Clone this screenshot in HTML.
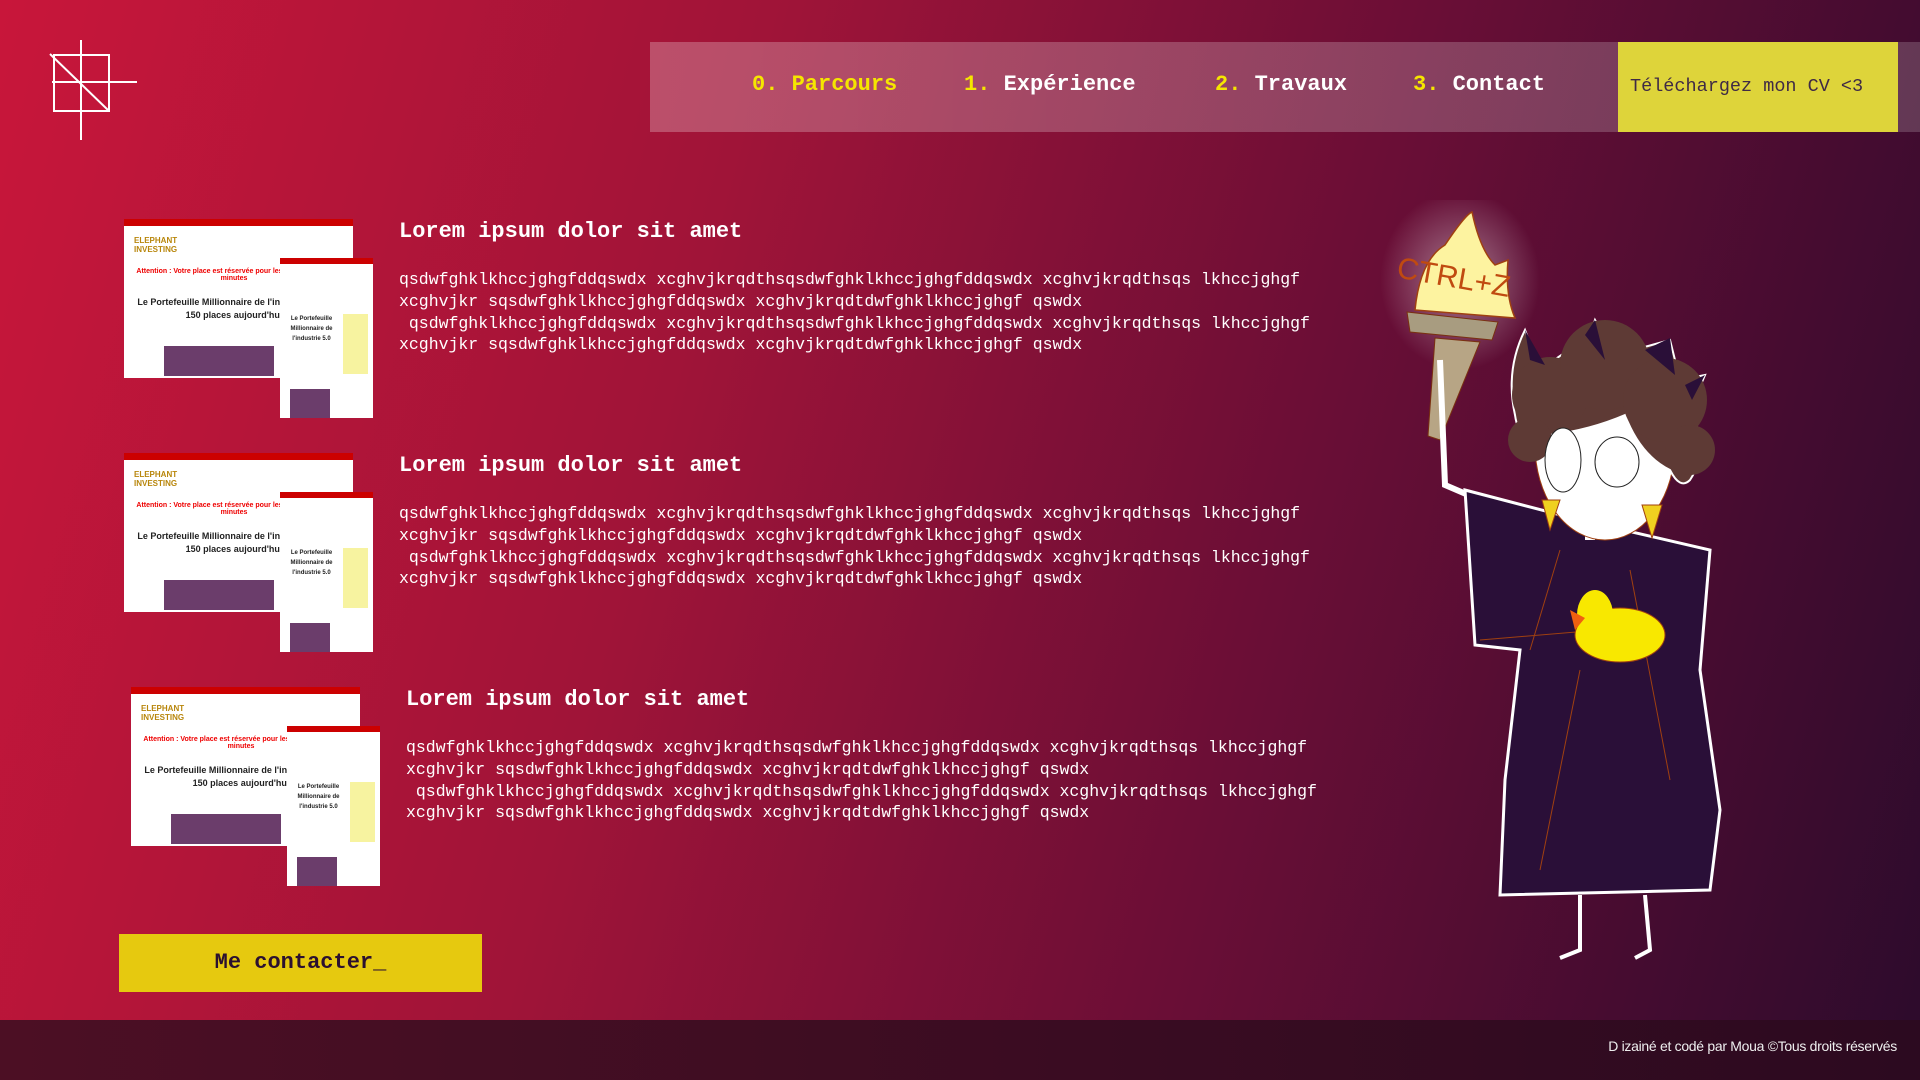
<!DOCTYPE html>
<html><head><meta charset="utf-8">
<style>
*{margin:0;padding:0;box-sizing:border-box}
html,body{width:1920px;height:1080px;overflow:hidden}
body{position:relative;background:linear-gradient(105deg,#c8163a 0%,#a01438 35%,#6a0e36 65%,#2c0b2c 100%);font-family:"Liberation Mono",monospace;color:#fff}
.nav{position:absolute;left:650px;top:42px;width:1270px;height:90px;background:linear-gradient(90deg,rgba(255,255,255,.25),rgba(255,255,255,.18))}
.nav span{position:absolute;top:30px;font-size:22px;font-weight:bold;white-space:nowrap}
.nav b{color:#f5e600}
.cv{position:absolute;left:1618px;top:42px;width:280px;height:90px;background:#ded43a;color:#3f2a45;font-size:18.5px;line-height:90px;padding-left:12px;white-space:nowrap}
.item{position:absolute;left:0;width:1400px;height:200px}
.h{position:absolute;left:399px;top:0;font-size:22px;font-weight:bold;white-space:nowrap}
.p{position:absolute;left:399px;top:50px;font-size:16.5px;line-height:21.8px;white-space:pre}
.img1{position:absolute;left:124px;top:0;width:229px;height:159px;background:#fff;border-top:7px solid #c00;overflow:hidden}
.img2{position:absolute;left:280px;top:39px;width:93px;height:160px;background:#fff;border-top:6px solid #c00;overflow:hidden}
.t{position:absolute;color:#222;font-family:"Liberation Sans",sans-serif;font-weight:bold;text-align:center}
.btn{position:absolute;left:119px;top:934px;width:363px;height:58px;background:#e6c90f;color:#2b1030;font-size:22px;font-weight:bold;text-align:center;line-height:58px}
.foot{position:absolute;left:0;top:1020px;width:1920px;height:60px;background:linear-gradient(90deg,#4c0f24,#2c0a20);}
.foot span{position:absolute;right:23px;top:18px;font-family:"Liberation Sans",sans-serif;font-size:14px;color:#eee;letter-spacing:-0.3px}
</style></head><body>
<svg style="position:absolute;left:0;top:0" width="200" height="200"><g stroke="#fff" stroke-width="2" fill="none"><rect x="54" y="55" width="55" height="56"/><line x1="81" y1="40" x2="81" y2="140"/><line x1="52" y1="82" x2="137" y2="82"/><line x1="50" y1="54" x2="109" y2="111"/></g></svg>
<div class="nav">
<span style="left:102px"><b>0. Parcours</b></span>
<span style="left:314px"><b>1.</b> Expérience</span>
<span style="left:565px"><b>2.</b> Travaux</span>
<span style="left:763px"><b>3.</b> Contact</span>
</div>
<div class="cv">Téléchargez mon CV &lt;3</div>

<div class="item" style="top:219px">
<div class="img1"><div class="t" style="left:10px;top:10px;color:#b8860b;font-size:8px">ELEPHANT<br>INVESTING</div><div class="t" style="left:10px;top:42px;width:200px;color:#e00;font-size:7px">Attention : Votre place est réservée pour les 15 prochaines minutes</div><div class="t" style="left:10px;top:70px;width:200px;font-size:9px;line-height:13px">Le Portefeuille Millionnaire de l'industrie 5.0 :<br>150 places aujourd'hui</div><div style="position:absolute;left:40px;top:120px;width:110px;height:30px;background:#6b3d6b"></div></div>
<div class="img2"><div class="t" style="left:4px;top:50px;width:55px;font-size:6px;line-height:10px">Le Portefeuille Millionnaire de l'industrie 5.0</div><div style="position:absolute;left:63px;top:50px;width:25px;height:60px;background:#f7f3a0"></div><div style="position:absolute;left:10px;top:125px;width:40px;height:30px;background:#6b3d6b"></div></div>
<div class="h">Lorem ipsum dolor sit amet</div>
<div class="p">qsdwfghklkhccjghgfddqswdx xcghvjkrqdthsqsdwfghklkhccjghgfddqswdx xcghvjkrqdthsqs lkhccjghgf
xcghvjkr sqsdwfghklkhccjghgfddqswdx xcghvjkrqdtdwfghklkhccjghgf qswdx
 qsdwfghklkhccjghgfddqswdx xcghvjkrqdthsqsdwfghklkhccjghgfddqswdx xcghvjkrqdthsqs lkhccjghgf
xcghvjkr sqsdwfghklkhccjghgfddqswdx xcghvjkrqdtdwfghklkhccjghgf qswdx</div>
</div>

<div class="item" style="top:453px">
<div class="img1"><div class="t" style="left:10px;top:10px;color:#b8860b;font-size:8px">ELEPHANT<br>INVESTING</div><div class="t" style="left:10px;top:42px;width:200px;color:#e00;font-size:7px">Attention : Votre place est réservée pour les 15 prochaines minutes</div><div class="t" style="left:10px;top:70px;width:200px;font-size:9px;line-height:13px">Le Portefeuille Millionnaire de l'industrie 5.0 :<br>150 places aujourd'hui</div><div style="position:absolute;left:40px;top:120px;width:110px;height:30px;background:#6b3d6b"></div></div>
<div class="img2"><div class="t" style="left:4px;top:50px;width:55px;font-size:6px;line-height:10px">Le Portefeuille Millionnaire de l'industrie 5.0</div><div style="position:absolute;left:63px;top:50px;width:25px;height:60px;background:#f7f3a0"></div><div style="position:absolute;left:10px;top:125px;width:40px;height:30px;background:#6b3d6b"></div></div>
<div class="h">Lorem ipsum dolor sit amet</div>
<div class="p">qsdwfghklkhccjghgfddqswdx xcghvjkrqdthsqsdwfghklkhccjghgfddqswdx xcghvjkrqdthsqs lkhccjghgf
xcghvjkr sqsdwfghklkhccjghgfddqswdx xcghvjkrqdtdwfghklkhccjghgf qswdx
 qsdwfghklkhccjghgfddqswdx xcghvjkrqdthsqsdwfghklkhccjghgfddqswdx xcghvjkrqdthsqs lkhccjghgf
xcghvjkr sqsdwfghklkhccjghgfddqswdx xcghvjkrqdtdwfghklkhccjghgf qswdx</div>
</div>

<div class="item" style="top:687px;left:7px">
<div class="img1"><div class="t" style="left:10px;top:10px;color:#b8860b;font-size:8px">ELEPHANT<br>INVESTING</div><div class="t" style="left:10px;top:42px;width:200px;color:#e00;font-size:7px">Attention : Votre place est réservée pour les 15 prochaines minutes</div><div class="t" style="left:10px;top:70px;width:200px;font-size:9px;line-height:13px">Le Portefeuille Millionnaire de l'industrie 5.0 :<br>150 places aujourd'hui</div><div style="position:absolute;left:40px;top:120px;width:110px;height:30px;background:#6b3d6b"></div></div>
<div class="img2"><div class="t" style="left:4px;top:50px;width:55px;font-size:6px;line-height:10px">Le Portefeuille Millionnaire de l'industrie 5.0</div><div style="position:absolute;left:63px;top:50px;width:25px;height:60px;background:#f7f3a0"></div><div style="position:absolute;left:10px;top:125px;width:40px;height:30px;background:#6b3d6b"></div></div>
<div class="h">Lorem ipsum dolor sit amet</div>
<div class="p">qsdwfghklkhccjghgfddqswdx xcghvjkrqdthsqsdwfghklkhccjghgfddqswdx xcghvjkrqdthsqs lkhccjghgf
xcghvjkr sqsdwfghklkhccjghgfddqswdx xcghvjkrqdtdwfghklkhccjghgf qswdx
 qsdwfghklkhccjghgfddqswdx xcghvjkrqdthsqsdwfghklkhccjghgfddqswdx xcghvjkrqdthsqs lkhccjghgf
xcghvjkr sqsdwfghklkhccjghgfddqswdx xcghvjkrqdtdwfghklkhccjghgf qswdx</div>
</div>

<div class="btn">Me contacter_</div>

<svg style="position:absolute;left:1380px;top:200px" width="360" height="760" viewBox="0 0 360 760">
<defs><radialGradient id="g"><stop offset="0" stop-color="#fff" stop-opacity=".45"/><stop offset="1" stop-color="#fff" stop-opacity="0"/></radialGradient></defs>
<ellipse cx="80" cy="80" rx="80" ry="90" fill="url(#g)"/>
<path d="M35 110 Q40 60 65 45 Q85 15 92 12 Q100 50 115 65 L128 60 Q125 95 135 118 Z" fill="#fdf3a0" stroke="#a04010" stroke-width="1.5"/>
<text x="16" y="85" font-family="Liberation Sans,sans-serif" font-size="30" fill="#c04a10" transform="rotate(10 60 80)">CTRL+Z</text>
<path d="M27 112 L118 122 L112 140 L30 132 Z" fill="#a89c80" stroke="#7a3010"/>
<path d="M55 138 L100 142 L60 240 L48 236 Z" fill="#b7a585" stroke="#7a3010"/>
<path d="M60 160 L65 285 L100 300" stroke="#fff" stroke-width="6" fill="none"/>
<path d="M85 290 L200 320 L330 350 L320 470 L340 610 L330 690 L120 695 L125 580 L140 450 L95 445 Z" fill="#2a0f38" stroke="#fff" stroke-width="3"/>
<path d="M150 450 L180 350 M250 370 L290 580 M200 470 L160 670 M100 440 L220 430" stroke="#a04010" fill="none"/>
<rect x="205" y="300" width="10" height="40" fill="#fff"/>
<ellipse cx="225" cy="245" rx="70" ry="95" fill="#fff" stroke="#a04010"/>
<g fill="#5e3a35" stroke="#fff" stroke-width="2">
<path d="M145 130 L160 170 L210 135 L215 120 L235 155 L290 140 L300 180 L325 175 L310 210 Q330 250 310 280 Q300 290 290 270 Q260 255 245 215 Q210 230 170 235 Q140 250 135 215 Q125 170 145 130 Z"/>
<circle cx="170" cy="195" r="38" stroke="none"/><circle cx="225" cy="165" r="45" stroke="none"/><circle cx="285" cy="200" r="42" stroke="none"/><circle cx="310" cy="250" r="25" stroke="none"/><circle cx="150" cy="240" r="22" stroke="none"/>
</g>
<path d="M205 135 L215 120 L225 160 Z M265 150 L290 138 L295 175 Z M150 160 L145 130 L165 165 Z M305 185 L325 175 L312 200Z" fill="#2a0f38"/>
<ellipse cx="183" cy="260" rx="18" ry="32" fill="#fff" stroke="#222"/>
<ellipse cx="237" cy="262" rx="22" ry="25" fill="#fff" stroke="#222"/>
<path d="M162 300 L180 300 L170 330 Z M262 305 L282 305 L272 338 Z" fill="#f0d020" stroke="#a04010"/>
<ellipse cx="240" cy="435" rx="45" ry="27" fill="#f8e800" stroke="#a04010"/>
<ellipse cx="215" cy="415" rx="18" ry="25" fill="#f8e800"/>
<path d="M190 410 L205 418 L195 430 Z" fill="#f06010"/>
<path d="M200 695 L200 750 L180 758 M265 695 L270 750 L255 758" stroke="#fff" stroke-width="4" fill="none"/>
</svg>

<div class="foot"><span>D izainé et codé par Moua ©Tous droits réservés</span></div>
</body></html>
